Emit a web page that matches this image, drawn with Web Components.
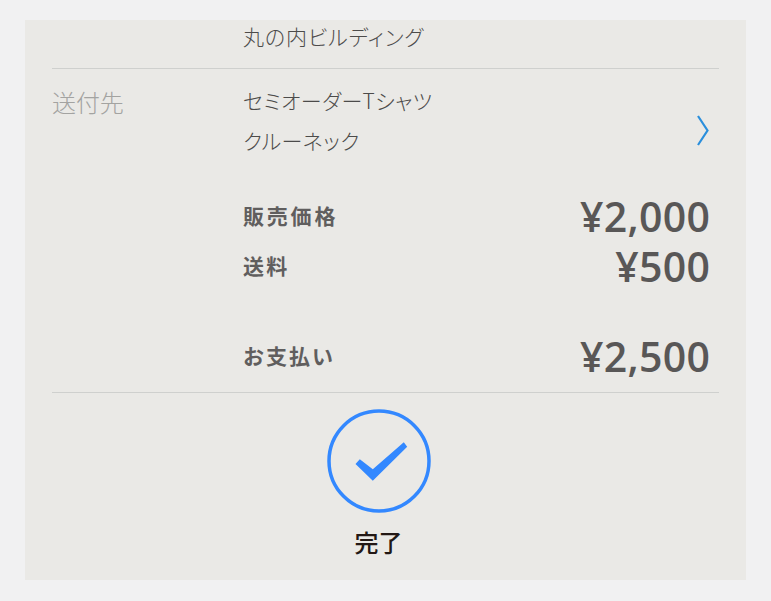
<!DOCTYPE html>
<html lang="ja"><head><meta charset="utf-8">
<style>
html,body{margin:0;padding:0;background:#f1f1f2;}
body{width:771px;height:601px;overflow:hidden;font-family:"Noto Sans CJK JP","Noto Sans",sans-serif;}
</style></head><body>
<order-card></order-card>
<script>
function def(name, html){
  customElements.define(name, class extends HTMLElement{
    constructor(){super();this.attachShadow({mode:'open'}).innerHTML=html;}
  });
}
def('price-row',`<style>
:host{display:flex;justify-content:space-between;align-items:center;height:50px;color:#595757;}
.l{font-size:21px;font-weight:700;letter-spacing:var(--ls,2.3px);opacity:.95;margin-top:-2px}
.v{font-family:"Open Sans","Noto Sans",sans-serif;font-size:41px;font-weight:600;line-height:50px;letter-spacing:.35px;margin-right:-.35px}
</style><span class="l"><slot name="label"></slot></span><span class="v"><slot name="value"></slot></span>`);
def('check-mark',`<style>
:host{display:block;width:104px;height:104px}
svg{display:block}
</style><svg width="104" height="104" viewBox="0 0 104 104"><circle cx="52" cy="52" r="50" fill="none" stroke="#3388ff" stroke-width="3.500"/><polygon points="32.800,50.300 45.800,60.300 76.800,33.300 80.200,37.700 45.800,71.700 28.500,55" fill="#3388ff"/></svg>`);
def('order-card',`<style>
:host{display:block;box-sizing:border-box;margin:20px 25px 21px;width:721px;height:560px;background:#eae9e6;padding:0 27px 0 27px;color:#595757;overflow:hidden}
.top{height:48px;border-bottom:1px solid #cfd0ce;padding-left:191px;font-size:21px;line-height:32px;font-weight:300;color:#4c4b4a;font-feature-settings:"palt";letter-spacing:.9px}
.dest{display:grid;grid-template-columns:191px 1fr 30px;height:122px;padding-top:13px;box-sizing:border-box}
.lab{font-size:24px;line-height:40px;color:#a3a3a1;font-weight:300;letter-spacing:-.1px}
.names{font-size:21px;line-height:40px;font-weight:300;color:#4c4b4a;font-feature-settings:"palt";letter-spacing:.4px;margin-top:-2px}
.chev{display:flex;align-items:center;justify-content:flex-end;padding:0 10px 13px 0}
.prices{padding:0 9px 0 191px;}
.gap{height:40px}
.rule{border-bottom:1px solid #cfd0ce;height:11px}
.done{display:flex;flex-direction:column;align-items:center;padding:16px 14px 0 0;}
.done span{font-size:24px;line-height:36px;color:#231815;margin-top:11px;font-weight:500}
</style>
<div class="top">丸の内ビルディング</div>
<div class="dest">
  <div class="lab">送付先</div>
  <div class="names">セミオーダーTシャツ<br>クルーネック</div>
  <div class="chev"><svg width="12" height="31" viewBox="0 0 12 31"><path d="M1 1 L10.500 15.500 L1 30" fill="none" stroke="#2b8fdc" stroke-width="2.200"/></svg></div>
</div>
<div class="prices">
  <price-row style="--ls:2.8px"><span slot="label">販売価格</span><span slot="value">¥2,000</span></price-row>
  <price-row><span slot="label">送料</span><span slot="value">¥500</span></price-row>
  <div class="gap"></div>
  <price-row style="--ls:2px"><span slot="label">お支払い</span><span slot="value">¥2,500</span></price-row>
</div>
<div class="rule"></div>
<div class="done"><check-mark></check-mark><span>完了</span></div>`);
</script>
</body></html>
